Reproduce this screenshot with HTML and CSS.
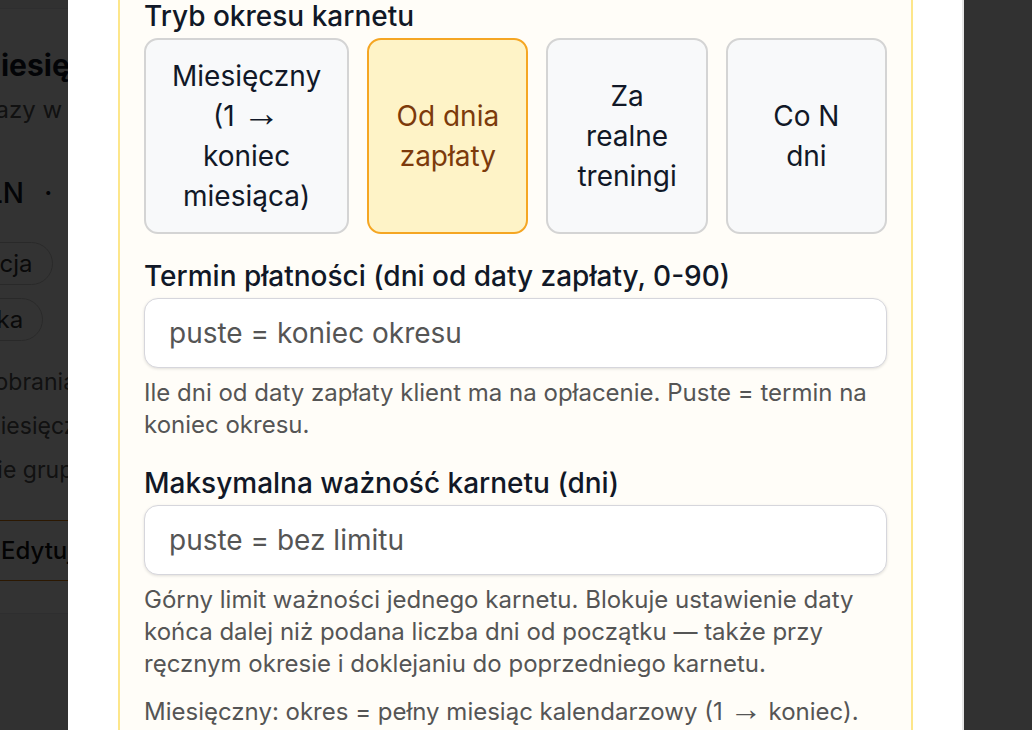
FILE: index.html
```html
<!DOCTYPE html>
<html lang="pl">
<head>
  <meta charset="UTF-8" />
  <meta name="viewport" content="width=device-width, initial-scale=1.0"/>
  <title>Karnety</title>
  <link rel="stylesheet" href="styles.css">
</head>
<body>

  <div class="app">
    <section class="plan">
      <h2 class="plan-name">Miesięczny</h2>
      <p class="plan-sub">2 razy w tygodniu</p>
      <p class="plan-price"><span>PLN</span><span>·</span><span>8 wejść</span></p>
      <div class="plan-tags">
        <span class="tag">Rekreacja</span>
        <span class="tag">Technika</span>
      </div>
      <ul class="plan-info">
        <li>Pobrania od dnia zapłaty</li>
        <li>Miesięcznie, bez limitu</li>
        <li>Nie grupowe zajęcia</li>
      </ul>
      <button class="plan-edit">Edytuj karnet</button>
    </section>
  </div>

  <div class="overlay">
    <div class="modal">
      <div class="period-box">

        <div class="field">
          <div class="field-label">Tryb okresu karnetu</div>
          <div class="modes">
            <button class="mode"><span>Miesięczny (1 <span class="arr">→</span> koniec miesiąca)</span></button>
            <button class="mode active"><span>Od dnia zapłaty</span></button>
            <button class="mode"><span>Za realne treningi</span></button>
            <button class="mode"><span>Co N dni</span></button>
          </div>
        </div>

        <div class="field">
          <div class="field-label">Termin płatności (dni od daty zapłaty, 0-90)</div>
          <input class="input" type="number" placeholder="puste = koniec okresu">
          <div class="hint">Ile dni od daty zapłaty klient ma na opłacenie. Puste = termin na koniec okresu.</div>
        </div>

        <div class="field">
          <div class="field-label">Maksymalna ważność karnetu (dni)</div>
          <input class="input" type="number" placeholder="puste = bez limitu">
          <div class="hint">Górny limit ważności jednego karnetu. Blokuje ustawienie daty końca dalej niż podana liczba dni od początku — także przy ręcznym okresie i doklejaniu do poprzedniego karnetu.</div>
        </div>

        <div class="hint note">Miesięczny: okres = pełny miesiąc kalendarzowy (1 <span class="arr">→</span> koniec).</div>
        <div class="hint note">Od dnia zapłaty: okres liczony od dnia wpłaty.</div>

      </div>
    </div>
  </div>

</body>
</html>
```

FILE: styles.css
```css
html, body {
  margin: 0;
  padding: 0;
  height: 100%;
  overflow: hidden;
}
body {
  background: #f6f6f6;
  font-family: Inter, "Noto Sans", sans-serif;
  color: #111827;
}

/* page under the dialog */
.app {
  padding-top: 8px;
}
.plan {
  width: 640px;
  margin-left: -56px;
  padding: 37px 28px 32px;
  background: #fff;
  border: 1px solid #e5e7eb;
  border-radius: 16px;
  box-sizing: border-box;
}
.plan-name {
  margin: 0;
  font-size: 30px;
  line-height: 38px;
  font-weight: 700;
}
.plan-sub {
  margin: 10px 0 0 -8px;
  font-size: 24px;
  line-height: 32px;
  color: #555;
}
.plan-price {
  display: flex;
  gap: 20px;
  margin: 49px 0 0 -4px;
  font-size: 28px;
  line-height: 36px;
  font-weight: 500;
}
.plan-tags {
  display: flex;
  flex-direction: column;
  align-items: flex-start;
  gap: 13px;
  margin: 31px 0 0 -72px;
}
.tag {
  padding: 7px 19px;
  font-size: 24px;
  line-height: 27px;
  border: 1.5px solid #ccc;
  border-radius: 999px;
  color: #333;
}
.plan-info {
  list-style: none;
  margin: 19px 0 0 7px;
  padding: 0;
  font-size: 23px;
  line-height: 44px;
  color: #555;
}
.plan-edit {
  display: block;
  width: 100%;
  height: 61px;
  margin-top: 28px;
  padding: 0 27px;
  text-align: left;
  font-family: inherit;
  font-size: 24px;
  font-weight: 500;
  color: #111;
  background: #fff;
  border: 1.5px solid #d97706;
  border-radius: 12px;
}

/* dialog */
.overlay {
  position: fixed;
  inset: 0;
  background: rgba(0, 0, 0, 0.8);
  display: flex;
  justify-content: center;
}
.modal {
  width: 896px;
  height: 100%;
  padding: 0 49px 0 50px;
  box-sizing: border-box;
  background: #fff;
  border-right: 2px solid #e5e5e5;
  overflow: hidden;
}
.period-box {
  margin-top: -28px;
  padding: 24px;
  background: #fffdf8;
  border: 2px solid #fde68a;
  border-radius: 16px;
}
.field + .field {
  margin-top: 24px;
}
.field-label {
  font-size: 28px;
  line-height: 36px;
  font-weight: 500;
  color: #111827;
  margin-bottom: 4px;
}
.modes {
  display: flex;
  gap: 18px;
}
.mode {
  flex: 1;
  min-height: 195px;
  padding: 16px 26px;
  display: flex;
  align-items: center;
  justify-content: center;
  text-align: center;
  font-family: inherit;
  font-size: 28px;
  line-height: 40px;
  color: #111827;
  background: #f8f9fa;
  border: 2px solid #d4d4d4;
  border-radius: 14px;
  cursor: pointer;
}
.mode.active {
  background: #fef3c7;
  border-color: #f5a623;
  color: #7c3a0b;
}
/* long thin arrow */
.arr {
  font-family: "Liberation Sans", sans-serif;
  font-size: 1.35em;
  line-height: 0;
}
.input {
  display: block;
  width: 100%;
  height: 70px;
  box-sizing: border-box;
  padding: 0 24px;
  font-family: inherit;
  font-size: 28px;
  color: #111;
  background: #fff;
  border: 1.5px solid #d6d6dc;
  border-radius: 14px;
  box-shadow: 0 1px 3px rgba(0, 0, 0, 0.12);
  outline: none;
}
.input::placeholder {
  color: #555;
}
.input::-webkit-inner-spin-button {
  display: none;
}
.hint {
  margin-top: 9px;
  font-size: 24px;
  line-height: 32px;
  color: #555;
}
.hint.note {
  margin-top: 16px;
}
```
